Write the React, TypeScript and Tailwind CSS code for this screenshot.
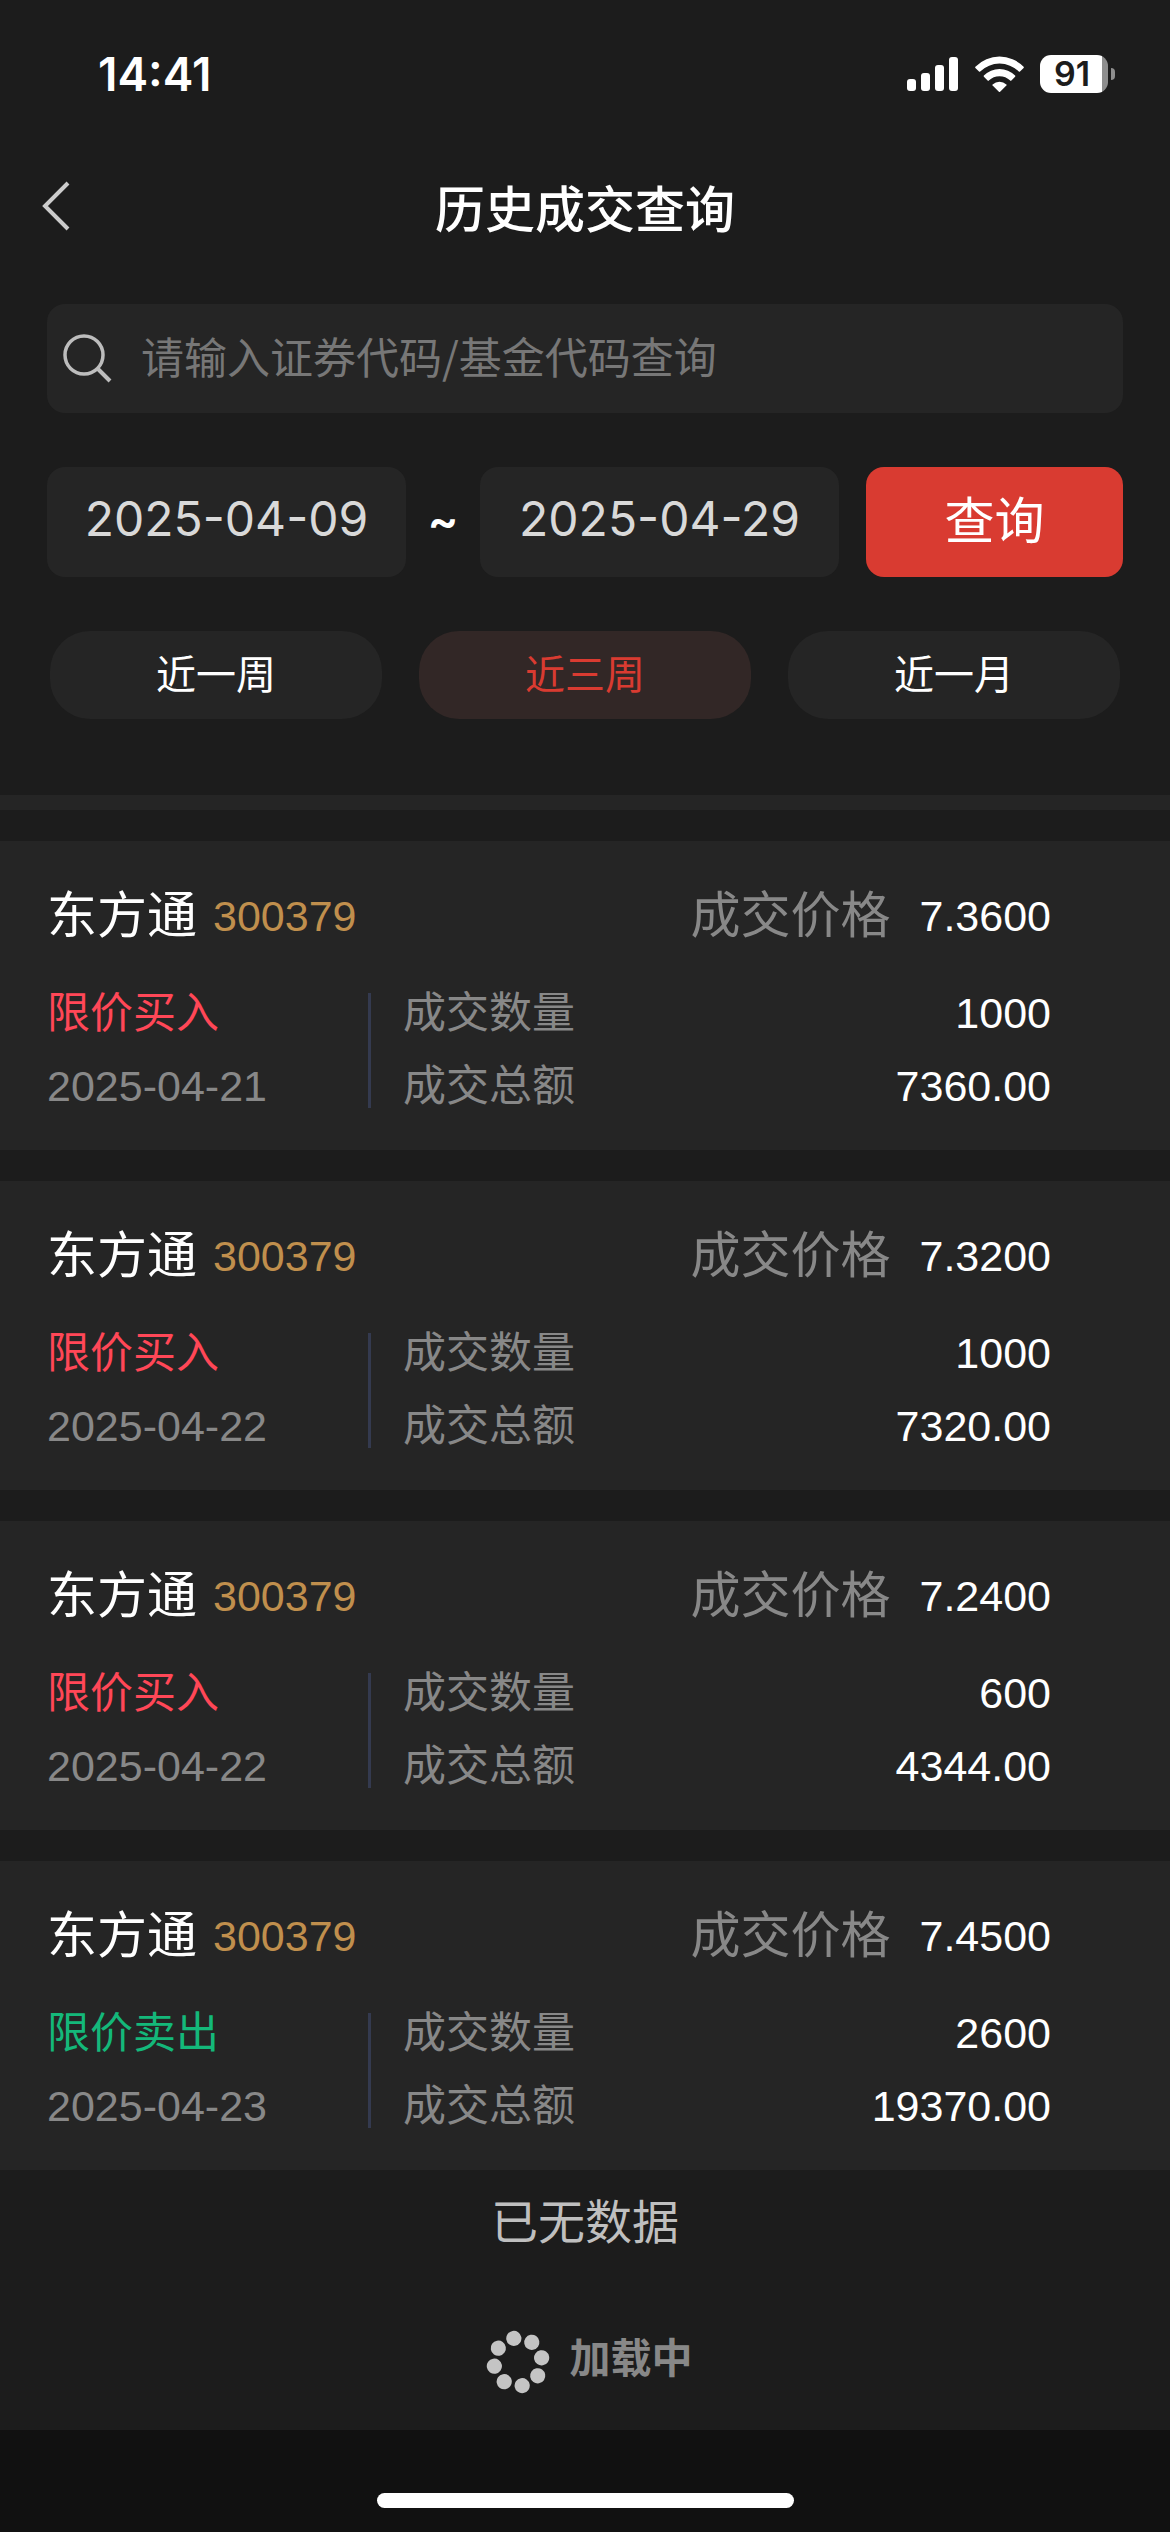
import { useState } from "react";
import clsx from "clsx";

type Trade = {
  id: number;
  name: string;
  code: string;
  side: "buy" | "sell";
  date: string;
  price: string;
  amount: string;
  total: string;
};

const trades: Trade[] = [
  { id: 1, name: "东方通", code: "300379", side: "buy", date: "2025-04-21", price: "7.3600", amount: "1000", total: "7360.00" },
  { id: 2, name: "东方通", code: "300379", side: "buy", date: "2025-04-22", price: "7.3200", amount: "1000", total: "7320.00" },
  { id: 3, name: "东方通", code: "300379", side: "buy", date: "2025-04-22", price: "7.2400", amount: "600", total: "4344.00" },
  { id: 4, name: "东方通", code: "300379", side: "sell", date: "2025-04-23", price: "7.4500", amount: "2600", total: "19370.00" },
];

const ranges = ["近一周", "近三周", "近一月"];

function StatusBar() {
  return (
    <div className="flex h-[148px] items-center justify-between pr-[55px] pl-[98px] font-['Inter',sans-serif] font-semibold">
      <span className="text-[46px] leading-[60px]">14:41</span>

      <div className="flex items-center">
        {/* Signal */}
        <svg width="51" height="34" viewBox="0 0 51 34" fill="currentColor">
          <rect x="0" y="22" width="9" height="12" rx="3" />
          <rect x="14" y="16" width="9" height="18" rx="3" />
          <rect x="28" y="8" width="9" height="26" rx="3" />
          <rect x="42" y="0" width="9" height="34" rx="3" />
        </svg>

        {/* Wifi */}
        <svg className="ml-[17px]" width="49" height="36" viewBox="0 0 49 36" fill="currentColor">
          <path d="M0.4 10.7A33.8 33.8 0 0 1 48.6 10.7Q49.2 11.3 48.6 11.9L45 15.4Q44.4 16 43.8 15.4A27.8 27.8 0 0 0 5.2 15.4Q4.6 16 4 15.4L0.4 11.9Q-0.2 11.3 0.4 10.7Z" />
          <path d="M8.9 19.6A21.6 21.6 0 0 1 40.1 19.6Q40.7 20.2 40.1 20.8L36.4 24.6Q35.8 25.2 35.2 24.6A15.6 15.6 0 0 0 13.8 24.6Q13.2 25.2 12.6 24.6L8.9 20.8Q8.3 20.2 8.9 19.6Z" />
          <path d="M17.6 28.4A10.4 10.4 0 0 1 31.4 28.4Q32 29 31.4 29.6L25.1 35.7Q24.5 36.2 23.9 35.7L17.6 29.6Q17 29 17.6 28.4Z" />
        </svg>

        {/* Battery */}
        <div className="ml-4 h-[38px] w-[68px] rounded-[11px] bg-[linear-gradient(to_right,#fff_91%,#8e8e8e_91%)] pr-1 text-center text-[34px] leading-[38px] text-[#1c1c1c]">
          91
        </div>
        <div className="ml-[3px] h-3 w-1 rounded-r-full bg-[#8e8e8e]" />
      </div>
    </div>
  );
}

function TradeCard({ trade }: { trade: Trade }) {
  return (
    <li className="bg-[#252525] pt-[45px] pr-[119px] pb-[27px] pl-[47px] text-[43px]">
      <div className="flex items-center justify-between leading-[60px]">
        <div className="flex items-center gap-4">
          <h2 className="text-[50px]">{trade.name}</h2>
          <span className="text-[#c08f4d]">{trade.code}</span>
        </div>
        <div className="flex items-center gap-[29px]">
          <span className="text-[50px] text-[#888]">成交价格</span>
          <span>{trade.price}</span>
        </div>
      </div>

      <div className="mt-[31px] flex items-center leading-[73px]">
        <div className="w-[321px]">
          <p className={trade.side === "buy" ? "text-[#ff4757]" : "text-[#14b87a]"}>
            {trade.side === "buy" ? "限价买入" : "限价卖出"}
          </p>
          <p className="text-[#888]">{trade.date}</p>
        </div>
        <div className="mr-8 h-[115px] w-[3px] bg-[#343a4f]" />
        <dl className="flex-1">
          <div className="flex justify-between">
            <dt className="text-[#888]">成交数量</dt>
            <dd>{trade.amount}</dd>
          </div>
          <div className="flex justify-between">
            <dt className="text-[#888]">成交总额</dt>
            <dd>{trade.total}</dd>
          </div>
        </dl>
      </div>
    </li>
  );
}

function Spinner() {
  return (
    <svg width="64" height="64" viewBox="0 0 64 64" fill="#c4c4c4">
      <g transform="rotate(-10 32 32)">
        <circle cx="32" cy="8" r="7.6" />
        <circle cx="49" cy="15" r="7.6" />
        <circle cx="56" cy="32" r="7.6" />
        <circle cx="49" cy="49" r="7.6" />
        <circle cx="32" cy="56" r="7.6" />
        <circle cx="15" cy="49" r="7.6" />
        <circle cx="8" cy="32" r="7.6" />
        <circle cx="15" cy="15" r="7.6" />
      </g>
    </svg>
  );
}

export default function App() {
  const [keyword, setKeyword] = useState("");
  const [startDate, setStartDate] = useState("2025-04-09");
  const [endDate, setEndDate] = useState("2025-04-29");
  const [range, setRange] = useState("近三周");

  return (
    <div className="flex min-h-screen flex-col bg-[#1c1c1c] font-['Liberation_Sans','Noto_Sans_CJK_SC',sans-serif] text-white">
      <StatusBar />

      {/* Header */}
      <header className="grid h-[116px] grid-cols-[1fr_auto_1fr] items-center px-[42px]">
        <button type="button" aria-label="返回" className="w-7">
          <svg width="28" height="50" viewBox="0 0 28 50" fill="none" stroke="#ccc" strokeWidth="4">
            <path d="M26 2L3 25L26 48" />
          </svg>
        </button>
        <h1 className="font-['Noto_Sans_CJK_SC',sans-serif] text-[50px] leading-[60px] font-medium">
          历史成交查询
        </h1>
      </header>

      {/* Query form */}
      <form className="pt-10" onSubmit={(e) => e.preventDefault()}>
        <div className="mx-[47px] flex h-[109px] items-center gap-[29px] rounded-[18px] bg-[#252525] px-4">
          <svg width="49" height="49" viewBox="0 0 49 49" fill="none" stroke="#bdbdbd" strokeWidth="3.5">
            <circle cx="21" cy="21" r="19" />
            <path d="M34 34L47 47" strokeWidth="4" />
          </svg>
          <input
            type="text"
            aria-label="证券代码或基金代码"
            placeholder="请输入证券代码/基金代码查询"
            value={keyword}
            onChange={(e) => setKeyword(e.target.value)}
            className="h-full min-w-0 flex-1 pb-2 font-['Noto_Sans_CJK_SC',sans-serif] text-[43px] outline-none placeholder:text-[#777]"
          />
        </div>

        <div className="mx-[47px] mt-[54px] flex h-[110px] items-center">
          <input
            type="text"
            aria-label="开始日期"
            value={startDate}
            onChange={(e) => setStartDate(e.target.value)}
            className="h-full min-w-0 flex-1 rounded-[18px] bg-[#252525] pb-2 text-center font-['Inter',sans-serif] text-[48px] text-[#d9d9d9] outline-none"
          />
          <span className="w-[74px] pb-1 text-center font-['Inter',sans-serif] text-[46px] font-semibold">~</span>
          <input
            type="text"
            aria-label="结束日期"
            value={endDate}
            onChange={(e) => setEndDate(e.target.value)}
            className="h-full min-w-0 flex-1 rounded-[18px] bg-[#252525] pb-2 text-center font-['Inter',sans-serif] text-[48px] text-[#d9d9d9] outline-none"
          />
          <button type="submit" className="ml-[27px] h-full w-[257px] rounded-[18px] bg-[#d93b31] text-[50px]">
            查询
          </button>
        </div>

        <div className="mx-[50px] mt-[54px] grid grid-cols-3 gap-[37px]">
          {ranges.map((item) => (
            <button
              key={item}
              type="button"
              onClick={() => setRange(item)}
              className={clsx(
                "h-[88px] rounded-[40px] text-[40px]",
                item === range ? "bg-[#322726] text-[#d93b31]" : "bg-[#252525]"
              )}
            >
              {item}
            </button>
          ))}
        </div>
      </form>

      <div className="mt-[76px] h-[15px] bg-[#252525]" />

      {/* Trades */}
      <ul className="mt-[31px] flex flex-col gap-[31px]">
        {trades.map((trade) => (
          <TradeCard key={trade.id} trade={trade} />
        ))}
      </ul>

      <p className="mt-[23px] text-center text-[47px] leading-[60px] text-[#bfbfbf]">已无数据</p>

      {/* Loading */}
      <div className="mt-[77px] mb-9 flex items-start justify-center gap-5 pl-2 text-[41px] leading-[50px] font-bold text-[#888]">
        <Spinner />
        <span className="font-['Noto_Sans_CJK_SC',sans-serif]">加载中</span>
      </div>

      {/* Home indicator */}
      <div className="mt-auto flex h-[102px] items-end justify-center bg-[#111] pb-6">
        <div className="h-[15px] w-[417px] rounded-full bg-white" />
      </div>
    </div>
  );
}
